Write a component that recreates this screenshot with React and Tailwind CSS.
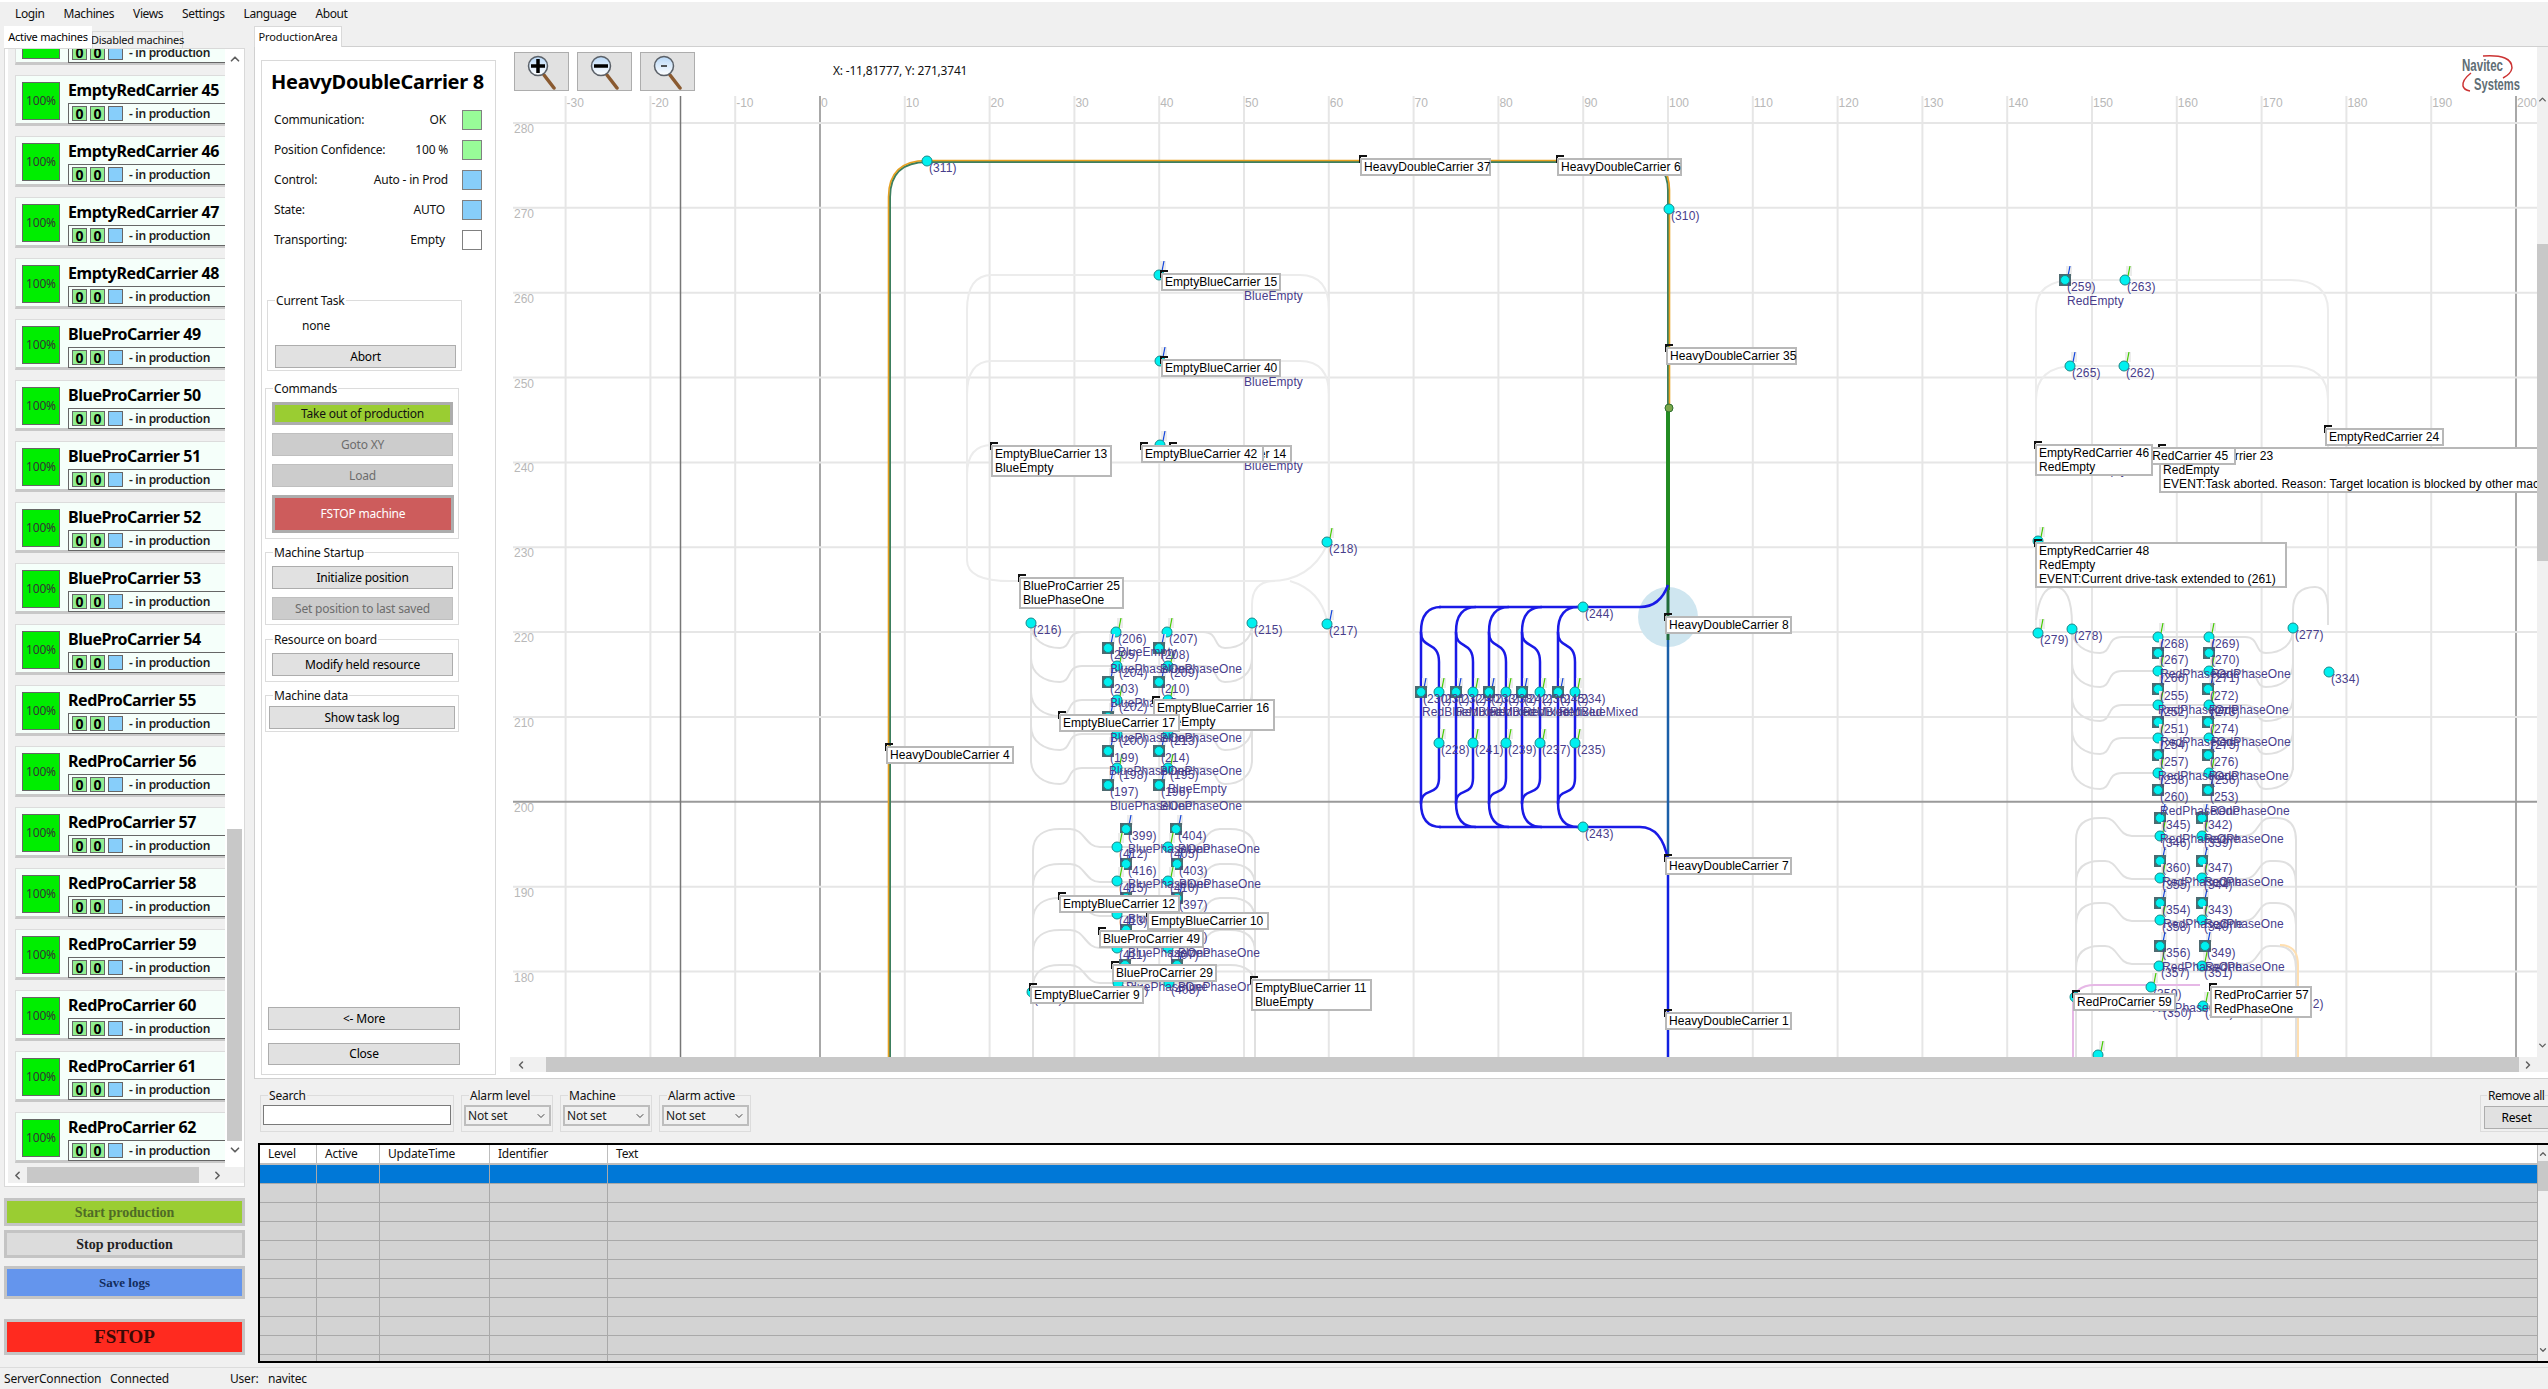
import React from "react";
import { ChevronDown, ChevronUp, ChevronLeft, ChevronRight } from "lucide-react";

const machines = [
  "EmptyRedCarrier 44", "EmptyRedCarrier 45", "EmptyRedCarrier 46", "EmptyRedCarrier 47", "EmptyRedCarrier 48",
  "BlueProCarrier 49", "BlueProCarrier 50", "BlueProCarrier 51", "BlueProCarrier 52", "BlueProCarrier 53", "BlueProCarrier 54",
  "RedProCarrier 55", "RedProCarrier 56", "RedProCarrier 57", "RedProCarrier 58", "RedProCarrier 59", "RedProCarrier 60", "RedProCarrier 61", "RedProCarrier 62",
];

const xOf = (v) => 820 + 8.48 * v;
const yOf = (v) => 123 + (280 - v) * 8.485;
const xTicks = Array.from({ length: 24 }, (_, i) => -30 + i * 10);
const yTicks = Array.from({ length: 11 }, (_, i) => 280 - i * 10);

// page coordinates: x, y, kind, number
const nodes = [
  [927, 161, "o", "(311)"], [1669, 209, "o", "(310)"], [1583, 607, "o", "(244)"], [1583, 827, "o", "(243)"],
  [1031, 623, "o", "(216)"], [1252, 623, "o", "(215)"], [1327, 624, "b", "(217)"], [1327, 542, "g", "(218)"],
  [1116, 632, "c", "(206)"], [1167, 632, "c", "(207)"], [1108, 648, "s", "(205)"], [1159, 648, "s", "(208)"],
  [1117, 666, "c", "(204)"], [1168, 666, "c", "(209)"], [1108, 682, "s", "(203)"], [1159, 682, "s", "(210)"],
  [1117, 700, "c", "(202)"], [1168, 700, "c", "(211)"], [1108, 717, "s", "(201)"], [1159, 717, "s", "(212)"],
  [1117, 734, "c", "(200)"], [1168, 734, "c", "(213)"], [1108, 751, "s", "(199)"], [1159, 751, "s", "(214)"],
  [1117, 768, "c", "(198)"], [1168, 768, "c", "(195)"], [1108, 785, "s", "(197)"], [1159, 785, "s", "(196)"],
  [1126, 829, "s", "(399)"], [1176, 829, "s", "(404)"], [1117, 847, "c", "(412)"], [1168, 847, "c", "(405)"],
  [1126, 864, "s", "(416)"], [1177, 864, "s", "(403)"], [1117, 881, "c", "(415)"], [1168, 881, "c", "(410)"],
  [1126, 898, "s", "(398)"], [1177, 898, "s", "(397)"], [1117, 914, "c", "(413)"], [1168, 914, "c", "(402)"],
  [1126, 930, "s", "(400)"], [1177, 930, "s", "(401)"], [1117, 948, "c", "(411)"], [1168, 948, "c", "(407)"],
  [1125, 965, "s", "(414)"], [1177, 965, "s", "(406)"], [1118, 983, "c", "(409)"], [1169, 983, "c", "(408)"],
  [1032, 992, "o", "(417)"],
  [1421, 692, "s", "(230)"], [1439, 692, "c", "(231)"], [1456, 692, "s", "(232)"], [1473, 692, "c", "(240)"], [1489, 692, "s", "(233)"],
  [1506, 692, "c", "(238)"], [1522, 692, "s", "(242)"], [1540, 692, "c", "(236)"], [1558, 692, "s", "(245)"], [1575, 692, "c", "(234)"],
  [1439, 743, "c", "(228)"], [1473, 743, "c", "(241)"], [1506, 743, "c", "(239)"], [1540, 743, "c", "(237)"], [1575, 743, "c", "(235)"],
  [1159, 275, "b", ""], [1160, 361, "b", ""], [1160, 445, "b", ""],
  [2065, 280, "s", "(259)"], [2125, 280, "g", "(263)"], [2070, 366, "b", "(265)"], [2124, 366, "g", "(262)"],
  [2038, 633, "g", "(279)"], [2072, 629, "o", "(278)"], [2293, 628, "o", "(277)"], [2329, 672, "o", "(334)"], [2038, 541, "g", ""],
  [2158, 637, "c", "(268)"], [2209, 637, "c", "(269)"], [2158, 653, "s", "(267)"], [2209, 653, "s", "(270)"],
  [2158, 671, "c", "(266)"], [2209, 671, "c", "(271)"], [2158, 689, "s", "(255)"], [2208, 689, "s", "(272)"],
  [2158, 705, "c", "(252)"], [2209, 705, "c", "(273)"], [2158, 722, "s", "(251)"], [2208, 722, "s", "(274)"],
  [2158, 738, "c", "(254)"], [2209, 738, "c", "(275)"], [2158, 755, "s", "(257)"], [2208, 755, "s", "(276)"],
  [2158, 773, "c", "(258)"], [2209, 773, "c", "(256)"], [2158, 790, "s", "(260)"], [2208, 790, "s", "(253)"],
  [2160, 818, "s", "(345)"], [2202, 818, "s", "(342)"], [2160, 836, "c", "(346)"], [2202, 836, "c", "(339)"],
  [2160, 861, "s", "(360)"], [2202, 861, "s", "(347)"], [2160, 878, "c", "(355)"], [2202, 878, "c", "(344)"],
  [2160, 903, "s", "(354)"], [2202, 903, "s", "(343)"], [2160, 920, "c", "(358)"], [2202, 920, "c", "(340)"],
  [2160, 946, "s", "(356)"], [2205, 946, "s", "(349)"], [2159, 966, "c", "(357)"], [2202, 966, "c", "(351)"],
  [2151, 987, "c", "(359)"], [2161, 1006, "c", "(350)"], [2203, 1006, "c", "(348)"], [2075, 997, "o", "(366)"], [2098, 1055, "g", ""],
];

const purple = [
  [1118, 656, "BlueEmpty"], [1110, 673, "BluePhaseOne"], [1160, 673, "BluePhaseOne"], [1110, 707, "BluePhaseOne"],
  [1110, 742, "BluePhaseOne"], [1160, 742, "BluePhaseOne"], [1109, 775, "BluePhaseOne"], [1160, 775, "BluePhaseOne"],
  [1110, 810, "BluePhaseOne"], [1160, 810, "BluePhaseOne"], [1168, 793, "BlueEmpty"],
  [1128, 853, "BluePhaseOne"], [1178, 853, "BluePhaseOne"], [1128, 888, "BluePhaseOne"], [1179, 888, "BluePhaseOne"],
  [1128, 923, "BluePhaseOne"], [1128, 957, "BluePhaseOne"], [1178, 957, "BluePhaseOne"], [1126, 991, "BluePhaseOne"], [1178, 991, "BluePhaseOne"],
  [1244, 300, "BlueEmpty"], [1244, 386, "BlueEmpty"], [1244, 470, "BlueEmpty"],
  [1422, 716, "RedBlueMixed"], [1456, 716, "RedBlueMixed"], [1490, 716, "RedBlueMixed"], [1523, 716, "RedBlueMixed"], [1559, 716, "RedBlueMixed"],
  [2067, 305, "RedEmpty"], [2070, 474, "RedEmpty"],
  [2160, 678, "RedPhaseOne"], [2211, 678, "RedPhaseOne"], [2158, 714, "RedPhaseOne"], [2209, 714, "RedPhaseOne"],
  [2160, 746, "RedPhaseOne"], [2211, 746, "RedPhaseOne"], [2158, 780, "RedPhaseOne"], [2209, 780, "RedPhaseOne"],
  [2160, 815, "RedPhaseOne"], [2210, 815, "RedPhaseOne"], [2160, 843, "RedPhaseOne"], [2204, 843, "RedPhaseOne"],
  [2162, 886, "RedPhaseOne"], [2204, 886, "RedPhaseOne"], [2163, 928, "RedPhaseOne"], [2204, 928, "RedPhaseOne"],
  [2162, 971, "RedPhaseOne"], [2205, 971, "RedPhaseOne"], [2152, 1012, "RedPhaseOne"], [2295, 1008, "(352)"],
];

// x, y, width, lines
const carriers = [
  [1360, 158, 131, ["HeavyDoubleCarrier 37"]], [1557, 158, 125, ["HeavyDoubleCarrier 6"]],
  [1666, 347, 131, ["HeavyDoubleCarrier 35"]], [1665, 616, 127, ["HeavyDoubleCarrier 8"]],
  [1665, 857, 127, ["HeavyDoubleCarrier 7"]], [1665, 1012, 127, ["HeavyDoubleCarrier 1"]],
  [886, 746, 128, ["HeavyDoubleCarrier 4"]],
  [1161, 273, 120, ["EmptyBlueCarrier 15"]], [1161, 359, 120, ["EmptyBlueCarrier 40"]],
  [1170, 445, 122, ["EmptyBlueCarrier 14"]], [1141, 445, 123, ["EmptyBlueCarrier 42"]],
  [991, 445, 121, ["EmptyBlueCarrier 13", "BlueEmpty"]], [1019, 577, 105, ["BlueProCarrier 25", "BluePhaseOne"]],
  [1153, 699, 122, ["EmptyBlueCarrier 16", "BlueEmpty"]], [1059, 714, 121, ["EmptyBlueCarrier 17"]],
  [1059, 895, 121, ["EmptyBlueCarrier 12"]], [1147, 912, 122, ["EmptyBlueCarrier 10"]],
  [1099, 930, 105, ["BlueProCarrier 49"]], [1112, 964, 105, ["BlueProCarrier 29"]],
  [1030, 986, 114, ["EmptyBlueCarrier 9"]], [1251, 979, 121, ["EmptyBlueCarrier 11", "BlueEmpty"]],
  [2325, 428, 119, ["EmptyRedCarrier 24"]],
  [2159, 447, 400, ["EmptyRedCarrier 23", "RedEmpty", "EVENT:Task aborted. Reason: Target location is blocked by other machine"]],
  [2114, 447, 122, ["EmptyRedCarrier 45"]], [2035, 444, 118, ["EmptyRedCarrier 46", "RedEmpty"]],
  [2035, 542, 252, ["EmptyRedCarrier 48", "RedEmpty", "EVENT:Current drive-task extended to (261)"]],
  [2073, 993, 103, ["RedProCarrier 59"]], [2210, 986, 102, ["RedProCarrier 57", "RedPhaseOne"]],
];

const clusterLeft = [632, 666, 700, 734, 768].map(
  (y) => `M1031,${y - 8} C1031,${y + 8} 1045,${y + 16} 1060,${y + 16} C1072,${y + 16} 1066,${y} 1082,${y} H1203 C1219,${y} 1213,${y + 16} 1225,${y + 16} C1240,${y + 16} 1252,${y + 8} 1252,${y - 8}`
);
const clusterLeftLower = [829, 864, 898, 930, 965].map(
  (y) => `M1033,${y + 22} C1033,${y + 6} 1045,${y} 1060,${y} H1070 C1085,${y} 1085,${y + 18} 1100,${y + 18} H1190 C1205,${y + 18} 1205,${y} 1220,${y} H1230 C1245,${y} 1255,${y + 6} 1255,${y + 22}`
);
const clusterRight = [637, 671, 705, 738, 773].map(
  (y) => `M2072,${y - 8} C2072,${y + 8} 2086,${y + 16} 2100,${y + 16} C2112,${y + 16} 2106,${y} 2122,${y} H2245 C2260,${y} 2254,${y + 16} 2266,${y + 16} C2281,${y + 16} 2293,${y + 8} 2293,${y - 8}`
);
const clusterRightLower = [818, 861, 903, 946].map(
  (y) => `M2076,${y + 22} C2076,${y + 6} 2086,${y} 2100,${y} H2105 C2118,${y} 2118,${y + 18} 2132,${y + 18} H2245 C2258,${y + 18} 2258,${y} 2270,${y} H2276 C2288,${y} 2296,${y + 6} 2296,${y + 22}`
);
const lightTracks = [
  "M1159,275 H992 Q967,275 967,310 V560 Q967,581 1010,581",
  "M1159,361 H992 Q967,361 967,395",
  "M992,445 Q967,445 967,475",
  "M1170,275 H1300 Q1329,275 1329,310 V540",
  "M1170,361 H1300 Q1329,361 1329,395",
  "M2036,633 V310 Q2036,280 2075,280 H2290 Q2328,280 2328,310 V610",
  "M2036,400 Q2036,366 2075,366 H2290 Q2328,366 2328,400",
  "M1000,581 H1270 Q1310,581 1327,545", "M1290,581 Q1320,590 1327,620", "M1252,623 V605 Q1252,581 1275,581",
];
const midTracks = [
  "M1031,623 V760", "M1252,623 V760", "M1033,850 V1057", "M1255,850 V1057",
  "M2072,629 V770", "M2293,628 V770", "M2076,840 V1057", "M2296,840 V1057",
  "M2036,620 Q2040,587 2055,587 Q2072,587 2072,625", "M2293,625 V610 Q2293,587 2315,587 Q2328,587 2328,610 V625",
  ...clusterLeft, ...clusterLeftLower, ...clusterRight, ...clusterRightLower,
];
const sidings = [
  [1421, 1439], [1456, 1473], [1489, 1506], [1522, 1540], [1558, 1575],
];

function MachineCard({ name }) {
  return (
    <div className="relative mb-[10px] flex h-[51px] w-[220px] shrink-0 border-t border-l border-[#dcdcdc] border-b-[3px] border-b-[#c8c8c8] bg-[#f5fffa] pt-[6px] pl-[6px]">
      <div className="flex h-[38px] w-[38px] shrink-0 items-center justify-center border border-[#666] bg-[#00ee00] text-[12px] text-[#333]">
        100%
      </div>
      <div className="ml-[8px] flex-1">
        <div className="-mt-[3px] mb-[2px] h-[22px] text-[16px] leading-[22px] font-bold tracking-[-0.45px] text-black">{name}</div>
        <div className="flex h-[21px] items-center border border-r-0 border-[#666] pl-[3px]">
          <span className="flex h-[15px] w-[15px] items-center justify-center border border-[#666] bg-[#90ee90] text-[14px] font-bold text-black">0</span>
          <span className="ml-[3px] flex h-[15px] w-[15px] items-center justify-center border border-[#666] bg-[#90ee90] text-[14px] font-bold text-black">0</span>
          <span className="ml-[3px] h-[15px] w-[15px] border border-[#666] bg-[#87cefa]"></span>
          <span className="ml-[6px] text-[12px] font-semibold tracking-[-0.3px] text-[#222]">- in production</span>
        </div>
      </div>
    </div>
  );
}

function SideButton({ className, textClass, children }) {
  return (
    <div className={`flex w-[241px] items-center justify-center border-[3px] border-[#c4c4c4] font-['Liberation_Serif',serif] font-bold tracking-normal ${className}`}>
      <span className={textClass}>{children}</span>
    </div>
  );
}

function LeftColumn() {
  return (
    <div className="flex w-[254px] shrink-0 flex-col pl-[4px]">
      <div className="flex h-[22px] items-end text-[11px] tracking-[-0.25px] whitespace-nowrap">
        <div className="z-10 flex h-[22px] w-[88px] items-center justify-center bg-white">Active machines</div>
        <div className="flex h-[17px] w-[91px] items-center justify-center border border-b-0 border-[#d9d9d9] text-[#111]">Disabled machines</div>
      </div>
      <div className="flex h-[1139px] w-[241px] flex-col border border-[#d9d9d9] bg-white pb-[3px] pl-[3px]">
        <div className="flex min-h-0 flex-1 bg-[#f0f0f0]">
          <div className="h-full w-[218px] overflow-hidden pl-[7px]">
            <div className="-mt-[35px] flex flex-col">
              {machines.map((name) => (
                <MachineCard key={name} name={name} />
              ))}
            </div>
          </div>
          <div className="flex w-[19px] flex-col items-center bg-white">
            <ChevronUp size={14} strokeWidth={3} className="mt-[3px] text-[#606060]" />
            <div className="mt-[763px] h-[312px] w-[15px] bg-[#c8c8c8]"></div>
            <ChevronDown size={14} strokeWidth={3} className="mt-[2px] text-[#606060]" />
          </div>
        </div>
        <div className="flex h-[16px] items-center bg-[#f0f0f0]">
          <ChevronLeft size={13} strokeWidth={3} className="ml-[3px] text-[#606060]" />
          <div className="ml-[3px] h-[16px] w-[172px] bg-[#c8c8c8]"></div>
          <ChevronRight size={13} strokeWidth={3} className="ml-[12px] text-[#606060]" />
        </div>
      </div>
      <SideButton className="mt-[11px] h-[28px] bg-[#9acd32]" textClass="text-[14px] text-[#4f6b26]">Start production</SideButton>
      <SideButton className="mt-[4px] h-[28px] bg-[#dcdcdc]" textClass="text-[14px] text-[#222]">Stop production</SideButton>
      <SideButton className="mt-[8px] h-[33px] bg-[#6495ed]" textClass="text-[13px] text-[#122c5c]">Save logs</SideButton>
      <SideButton className="mt-[20px] h-[36px] bg-[#ff2a1f]" textClass="text-[19px] text-[#3a0a06]">FSTOP</SideButton>
    </div>
  );
}

function GroupBox({ label, className, labelClass = "left-[7px]", bg = "bg-white", children }) {
  return (
    <div className={`relative border border-[#dcdcdc] ${className}`}>
      <span className={`absolute -top-[8px] px-[1px] text-[12px] leading-[16px] whitespace-nowrap text-[#111] ${bg} ${labelClass}`}>{label}</span>
      {children}
    </div>
  );
}

function Btn({ disabled, className = "", children }) {
  const tone = disabled ? "border-[#bfbfbf] bg-[#cccccc] text-[#6d6d6d]" : "border-[#adadad] bg-[#e1e1e1] text-black";
  return <div className={`flex items-center justify-center border text-[12px] ${tone} ${className}`}>{children}</div>;
}

function StatusRow({ label, value, swatch, className = "" }) {
  return (
    <div className="flex h-[20px] w-[220px] items-center pl-[12px] text-[12px] text-[#111]">
      <span className="flex-1">{label}</span>
      <span className={className}>{value}</span>
      <span className={`ml-[14px] h-[20px] w-[20px] border border-[#808080] ${swatch}`}></span>
    </div>
  );
}

function DetailPanel() {
  return (
    <div className="ml-[6px] flex h-[1015px] w-[235px] flex-col border border-[#d9d9d9] bg-white">
      <div className="mt-[6px] ml-[9px] h-[30px] text-[20px] leading-[30px] font-bold tracking-[-0.3px] text-black">HeavyDoubleCarrier 8</div>
      <div className="mt-[13px] flex flex-col gap-[10px]">
        <StatusRow label="Communication:" value="OK" swatch="bg-[#98fb98]" className="mr-[2px]" />
        <StatusRow label="Position Confidence:" value="100 %" swatch="bg-[#98fb98]" />
        <StatusRow label="Control:" value="Auto - in Prod" swatch="bg-[#87cefa]" />
        <StatusRow label="State:" value="AUTO" swatch="bg-[#87cefa]" className="mr-[3px]" />
        <StatusRow label="Transporting:" value="Empty" swatch="bg-white" className="mr-[3px]" />
      </div>
      <GroupBox label="Current Task" className="mt-[50px] ml-[5px] h-[71px] w-[195px] pt-[16px] pl-[7px]">
        <div className="h-[18px] pl-[27px] text-[12px] leading-[18px] text-[#111]">none</div>
        <Btn className="mt-[10px] h-[23px] w-[181px]">Abort</Btn>
      </GroupBox>
      <GroupBox label="Commands" className="mt-[17px] ml-[3px] h-[151px] w-[194px] pt-[13px] pl-[6px]">
        <div className="flex h-[23px] w-[181px] items-center justify-center border-[3px] border-[#adadad] bg-[#9acd32] text-[12px] text-[#111]">Take out of production</div>
        <Btn disabled className="mt-[8px] h-[23px] w-[181px]">Goto XY</Btn>
        <Btn disabled className="mt-[8px] h-[23px] w-[181px]">Load</Btn>
        <div className="mt-[8px] flex h-[38px] w-[182px] items-center justify-center border-[3px] border-[#adadad] bg-[#cd5c5c] text-[12px] text-white">FSTOP machine</div>
      </GroupBox>
      <GroupBox label="Machine Startup" className="mt-[13px] ml-[3px] h-[73px] w-[194px] pt-[13px] pl-[6px]">
        <Btn className="h-[23px] w-[181px]">Initialize position</Btn>
        <Btn disabled className="mt-[8px] h-[23px] w-[181px]">Set position to last saved</Btn>
      </GroupBox>
      <GroupBox label="Resource on board" className="mt-[14px] ml-[3px] h-[43px] w-[194px] pt-[13px] pl-[6px]">
        <Btn className="h-[23px] w-[181px]">Modify held resource</Btn>
      </GroupBox>
      <GroupBox label="Machine data" className="mt-[13px] ml-[3px] h-[37px] w-[194px] pt-[10px] pl-[3px]">
        <Btn className="h-[23px] w-[186px]">Show task log</Btn>
      </GroupBox>
      <Btn className="mt-[275px] ml-[6px] h-[23px] w-[192px]">&lt;- More</Btn>
      <Btn className="mt-[13px] ml-[6px] h-[22px] w-[192px]">Close</Btn>
    </div>
  );
}

function Magnifier({ mode }) {
  return (
    <svg width="30" height="36" viewBox="0 0 30 36">
      <defs>
        <linearGradient id={`lens-${mode}`} x1="0" y1="0" x2="0" y2="1">
          <stop offset="0" stopColor="#b8d8f8" />
          <stop offset="1" stopColor="#ffffff" />
        </linearGradient>
      </defs>
      <line x1="17" y1="21" x2="27" y2="34" stroke="#8a5a30" strokeWidth="3.5" strokeLinecap="round" />
      <circle cx="11" cy="12" r="9.5" fill={`url(#lens-${mode})`} stroke="#5a6068" strokeWidth="1.5" />
      {mode === "plus" && <path d="M11 5 V19 M4 12 H18" stroke="#000" strokeWidth="3.5" />}
      {mode === "minus" && <path d="M4 12 H18" stroke="#000" strokeWidth="3.5" />}
      {mode === "small" && <path d="M8 12 H14" stroke="#222" strokeWidth="1.5" />}
    </svg>
  );
}

function TrackNode({ x, y, kind }) {
  const tick = kind === "c" || kind === "g" ? "#44cc00" : "#1144dd";
  return (
    <g>
      {kind !== "o" && <rect x={x + 1} y={y - 14} width="6" height="10" fill="#ececec" />}
      {kind !== "o" && <line x1={x + 3} y1={y - 4} x2={x + 5} y2={y - 14} stroke={tick} strokeWidth="1.2" />}
      {kind === "s" && <rect x={x - 6} y={y - 6} width="12" height="12" fill="#4d6a70" />}
      <circle cx={x} cy={y} r={kind === "s" ? 4.5 : 5} fill="#00f0f0" stroke="#1a8a8a" strokeWidth="1" />
    </g>
  );
}

function TrackMap() {
  return (
    <svg width="2027" height="1010" viewBox="510 47 2027 1010" className="block font-['Liberation_Sans',sans-serif] tracking-normal">
      {xTicks.map((v) => (
        <g key={v}>
          <line x1={xOf(v)} y1="96" x2={xOf(v)} y2="1057" stroke={v === 0 || v === 200 ? "#a8a8a8" : "#e6e6e6"} strokeWidth="2" />
          <text x={xOf(v) + 1} y="107" fontSize="12" fill="#b8b8b8">{v}</text>
        </g>
      ))}
      {yTicks.map((v) => (
        <g key={v}>
          <line x1="513" y1={yOf(v)} x2="2537" y2={yOf(v)} stroke={v === 200 ? "#9a9a9a" : "#e6e6e6"} strokeWidth="2" />
          <text x="514" y={yOf(v) + 10} fontSize="12" fill="#b8b8b8">{v}</text>
        </g>
      ))}
      <line x1="680.5" y1="96" x2="680.5" y2="1057" stroke="#777" strokeWidth="1.5" />

      {lightTracks.map((d) => (
        <path key={d} d={d} fill="none" stroke="#ececec" strokeWidth="2" />
      ))}
      {midTracks.map((d) => (
        <path key={d} d={d} fill="none" stroke="#e0e0e0" strokeWidth="2" />
      ))}
      <path d="M2073,1057 V1005 Q2073,985 2095,985 H2200" fill="none" stroke="#e6b8e6" strokeWidth="2" />
      <path d="M2280,945 Q2298,945 2298,965 V1057" fill="none" stroke="#ffdfb0" strokeWidth="2" />

      <circle cx="1668" cy="617" r="30" fill="#cfe6f0" />
      <path d="M890,1057 V197 Q890,162 927,162 H1640 Q1668,162 1668,190 V409" fill="none" stroke="#3c7f5f" strokeWidth="2" />
      <path d="M888.5,1057 V197 Q888.5,160.5 927,160.5 H1640 Q1669.5,160.5 1669.5,190 V409" fill="none" stroke="#e6a020" strokeWidth="1.6" />
      <line x1="1668" y1="409" x2="1668" y2="590" stroke="#228b22" strokeWidth="4" />
      <line x1="1668" y1="590" x2="1668" y2="640" stroke="#1f6b3a" strokeWidth="3" />
      <line x1="1668" y1="640" x2="1668" y2="860" stroke="#1b5fa8" strokeWidth="2.5" />
      <line x1="1668" y1="860" x2="1668" y2="1057" stroke="#1020e0" strokeWidth="2.5" />
      <circle cx="1669" cy="408" r="4" fill="#7aa84a" stroke="#2f6f2f" />

      <g fill="none" stroke="#1a1ae6" strokeWidth="2.5">
        <path d="M1439,607 H1640 Q1660,607 1668,585" />
        <path d="M1439,827 H1640 Q1662,827 1668,860" />
        {sidings.map(([x0, x1]) => (
          <g key={x0}>
            <path d={`M${x0 + 20},607 Q${x0},607 ${x0},632 V803 Q${x0},827 ${x0 + 20},827`} />
            <path d={`M${x0},632 C${x0},650 ${x1},640 ${x1},662 V778 C${x1},798 ${x0},786 ${x0},804`} />
          </g>
        ))}
      </g>

      {nodes.map(([x, y, kind], i) => (
        <TrackNode key={i} x={x} y={y} kind={kind} />
      ))}
      {/* texts after all nodes so the squares don't cover them */}
      <g fontSize="12" letterSpacing="0.1" fill="#483d8b">
        {nodes.map(([x, y, , label], i) =>
          label ? (
            <text key={i} x={x + 2} y={y + 11}>{label}</text>
          ) : null
        )}
        {purple.map(([x, y, text], i) => (
          <text key={i} x={x} y={y}>{text}</text>
        ))}
      </g>
      {carriers.map(([x, y], i) => (
        <path key={i} d={`M${x},${y + 5} V${y - 2} H${x + 7}`} fill="none" stroke="#111" strokeWidth="2" />
      ))}

      <text x="2462" y="71" fontSize="17" fontWeight="bold" fill="#5f6e75" textLength="41" lengthAdjust="spacingAndGlyphs">Navitec</text>
      <text x="2474" y="90" fontSize="17" fontWeight="bold" fill="#5f6e75" textLength="46" lengthAdjust="spacingAndGlyphs">Systems</text>
      <path d="M2483,56 Q2512,54 2512,68 Q2511,74 2503,78" fill="none" stroke="#cc3333" strokeWidth="1.5" />
      <path d="M2471,73 Q2462,80 2463,86 Q2464,90 2470,91" fill="none" stroke="#cc3333" strokeWidth="1.5" />
    </svg>
  );
}

function CanvasArea() {
  return (
    <div className="flex h-[1031px] w-[2038px] flex-col">
      <div className="flex h-[1010px]">
        <div className="relative h-[1010px] w-[2027px] overflow-hidden bg-white">
          <TrackMap />
          <div className="absolute top-[5px] left-[4px] flex gap-[8px]">
            {["plus", "minus", "small"].map((mode) => (
              <div key={mode} className="flex h-[39px] w-[55px] items-center justify-center border border-[#adadad] bg-[#e1e1e1]">
                <Magnifier mode={mode} />
              </div>
            ))}
          </div>
          <div className="absolute top-[16px] left-[323px] text-[12px] leading-[16px] text-[#111]">X: -11,81777, Y: 271,3741</div>
          {carriers.map(([x, y, w, lines], i) => (
            <div
              key={i}
              className="absolute border-2 border-[#b8b8b8] bg-white px-[2px] font-['Liberation_Sans',sans-serif] text-[12px] leading-[14px] tracking-[0.05px] whitespace-nowrap text-black"
              style={{ left: x - 510, top: y - 47, width: w }}
            >
              {lines.map((line) => (
                <div key={line}>{line}</div>
              ))}
            </div>
          ))}
        </div>
        <div className="flex w-[11px] flex-col items-center bg-[#f0f0f0]">
          <ChevronUp size={11} strokeWidth={3} className="mt-[47px] text-[#606060]" />
          <div className="mt-[139px] h-[317px] w-[11px] bg-[#c8c8c8]"></div>
          <ChevronDown size={11} strokeWidth={3} className="mt-[479px] text-[#606060]" />
        </div>
      </div>
      <div className="flex h-[15px] items-center bg-[#f0f0f0]">
        <ChevronLeft size={12} strokeWidth={3} className="ml-[5px] text-[#606060]" />
        <div className="ml-[19px] h-[15px] w-[1973px] bg-[#c8c8c8]"></div>
        <ChevronRight size={12} strokeWidth={3} className="ml-[3px] text-[#606060]" />
      </div>
    </div>
  );
}

function FilterSelect({ label }) {
  return (
    <GroupBox label={label} bg="bg-[#f0f0f0]" className="h-[37px] w-[92px] pt-[9px] pl-[2px]">
      <div className="flex h-[21px] w-[87px] items-center justify-between border-2 border-[#bdbdbd] px-[2px] text-[12px] text-[#222]">
        <span>Not set</span>
        <ChevronDown size={12} className="text-[#444]" />
      </div>
    </GroupBox>
  );
}

function AlarmGrid() {
  const cols = ["Level", "Active", "UpdateTime", "Identifier", "Text"];
  return (
    <div className="ml-[4px] flex h-[220px] w-[2290px] border-y-2 border-l-2 border-black">
      <div className="min-w-0 flex-1 overflow-hidden">
        <div className="grid h-[20px] grid-cols-[57px_63px_110px_118px_1fr] bg-white text-[12px] text-[#111]">
          {cols.map((c) => (
            <div key={c} className="flex items-center border-r border-b-2 border-[#bdbdbd] pl-[8px]">{c}</div>
          ))}
        </div>
        {Array.from({ length: 11 }, (_, row) => (
          <div key={row} className={`grid h-[19px] grid-cols-[57px_63px_110px_118px_1fr] ${row === 0 ? "bg-[#0078d7]" : "bg-[#d3d3d3]"}`}>
            {cols.map((c) => (
              <div key={c} className="border-r border-b border-[#a9a9a9]"></div>
            ))}
          </div>
        ))}
      </div>
      <div className="flex w-[10px] flex-col items-center bg-[#f0f0f0]">
        <ChevronUp size={10} strokeWidth={3} className="mt-[4px] text-[#606060]" />
        <div className="mt-[2px] h-[30px] w-[10px] bg-[#c8c8c8]"></div>
        <ChevronDown size={10} strokeWidth={3} className="mt-[154px] text-[#606060]" />
      </div>
    </div>
  );
}

export default function App() {
  return (
    <div className="flex h-[1389px] w-[2548px] flex-col overflow-hidden bg-[#f0f0f0] font-['Noto_Sans',sans-serif] tracking-[-0.2px]">
      <div className="flex h-[26px] items-center gap-[19px] border-t-2 border-white pl-[15px] text-[12px] tracking-[-0.4px] text-[#111]">
        <span>Login</span>
        <span>Machines</span>
        <span>Views</span>
        <span>Settings</span>
        <span>Language</span>
        <span>About</span>
      </div>
      <div className="flex h-[1341px]">
        <LeftColumn />
        <div className="flex min-w-0 flex-1 flex-col">
          <div className="h-[20px]">
            <div className="relative z-10 flex h-[21px] w-[88px] items-center justify-center border-x border-t border-[#d9d9d9] bg-white text-[11px] tracking-[-0.1px] text-[#111]">ProductionArea</div>
          </div>
          <div className="flex h-[1033px] border-y border-l border-[#d0d0d0] bg-white pt-[13px]">
            <div className="w-[255px] shrink-0">
              <DetailPanel />
            </div>
            <div className="-mt-[13px]">
              <CanvasArea />
            </div>
          </div>
          <div className="flex h-[64px] gap-[7px] pt-[16px] pl-[6px]">
            <GroupBox label="Search" bg="bg-[#f0f0f0]" className="h-[37px] w-[194px] pt-[9px] pl-[2px]">
              <div className="h-[20px] w-[188px] border border-[#7a7a7a] bg-white"></div>
            </GroupBox>
            <FilterSelect label="Alarm level" />
            <FilterSelect label="Machine" />
            <FilterSelect label="Alarm active" />
            <GroupBox label="Remove all" labelClass="left-[6px] tracking-[-0.5px]" bg="bg-[#f0f0f0]" className="ml-auto h-[37px] w-[68px] border-r-0 pt-[10px] pl-[3px]">
              <Btn className="h-[23px] w-[65px]">Reset</Btn>
            </GroupBox>
          </div>
          <AlarmGrid />
        </div>
      </div>
      <div className="flex h-[22px] items-center border-t border-[#dcdcdc] text-[12px] text-[#111]">
        <span className="ml-[4px] w-[106px]">ServerConnection</span>
        <span className="w-[120px]">Connected</span>
        <span className="w-[38px]">User:</span>
        <span>navitec</span>
      </div>
    </div>
  );
}
